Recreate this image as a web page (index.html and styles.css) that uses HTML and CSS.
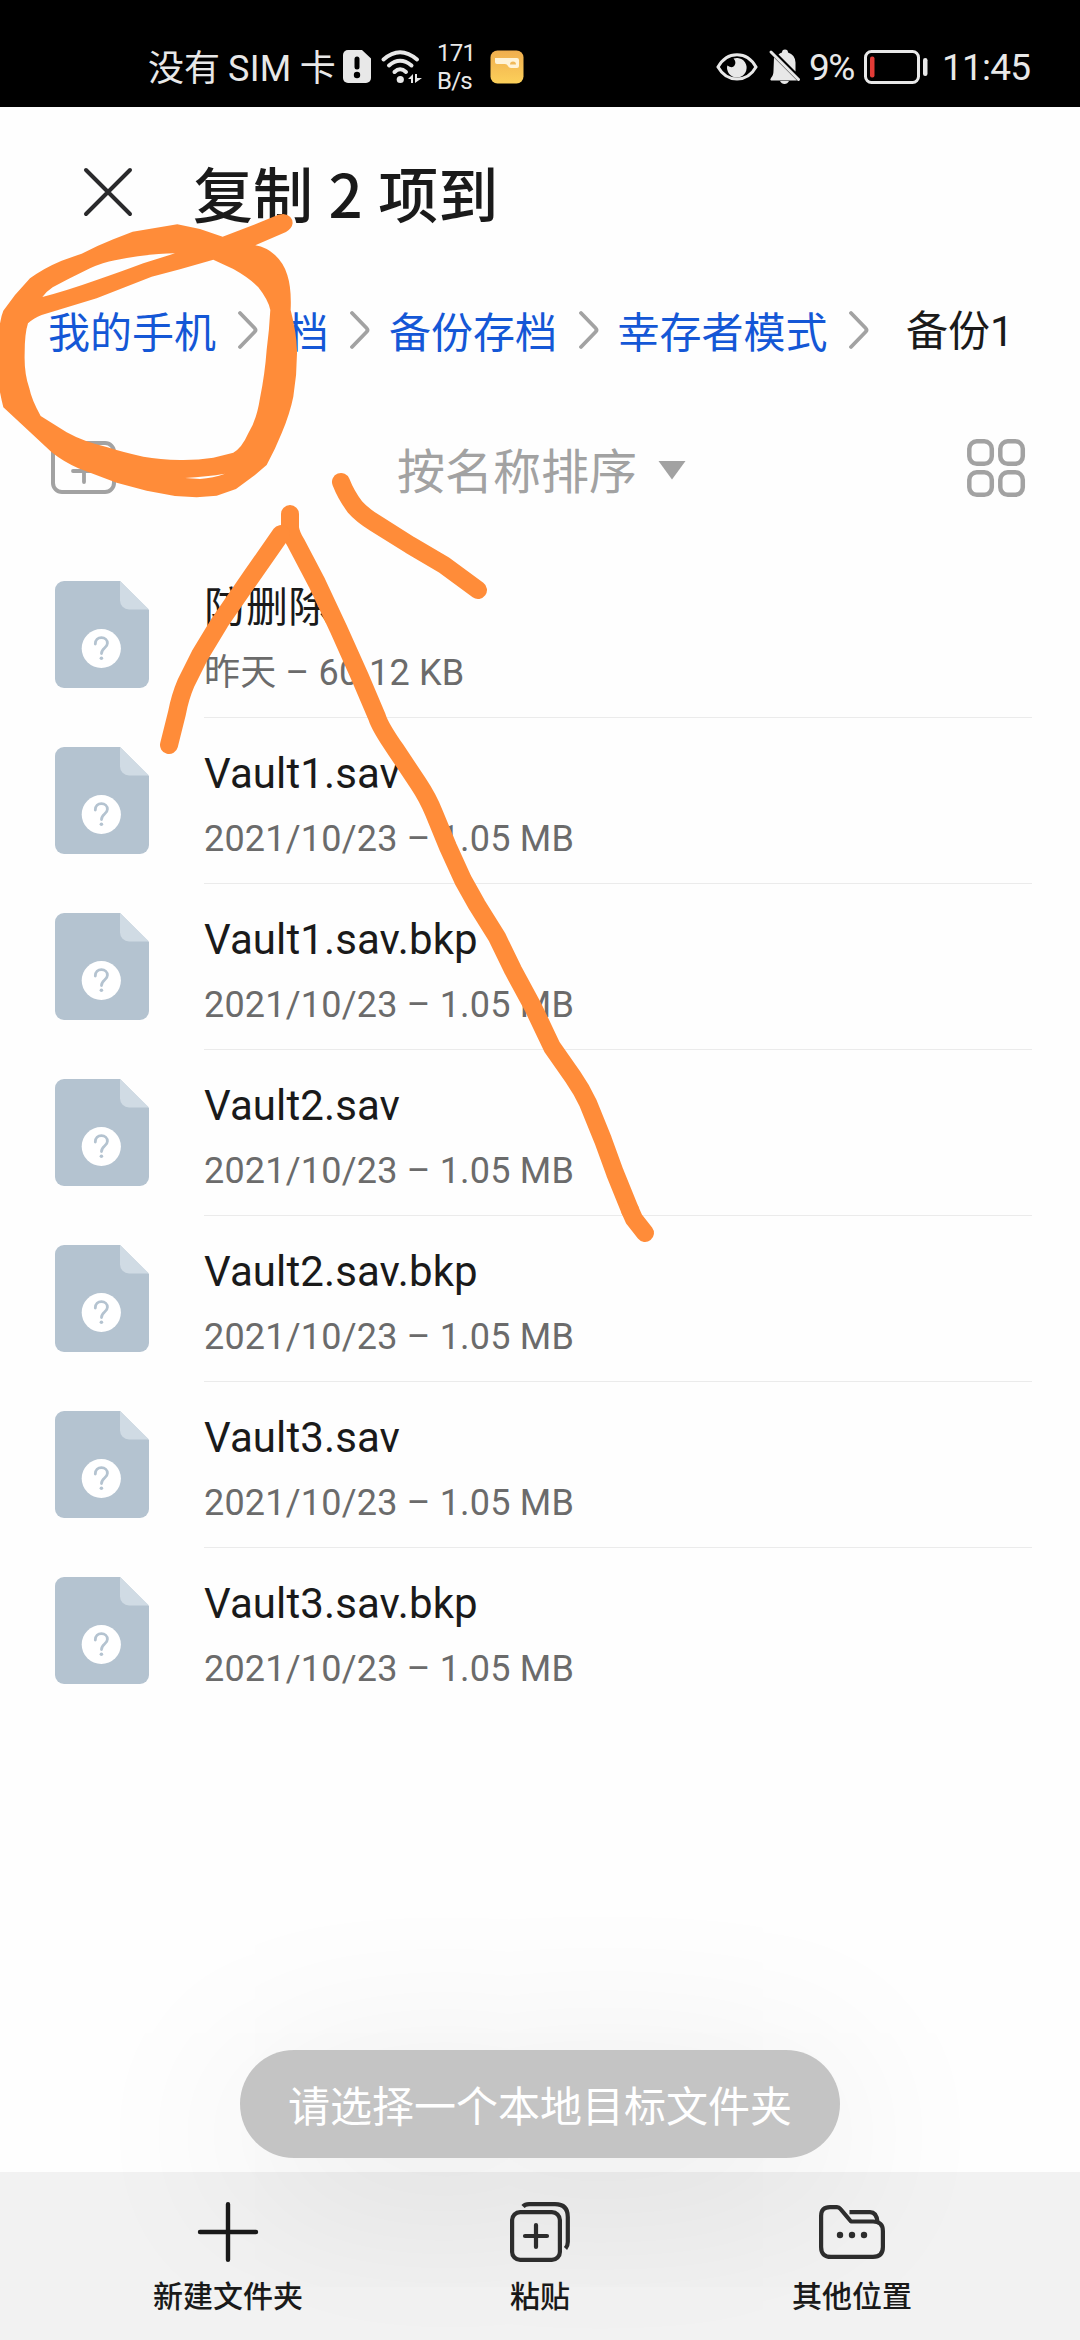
FILE: index.html
```html
<!DOCTYPE html>
<html lang="zh-CN">
<head>
<meta charset="utf-8">
<title>复制 2 项到</title>
<link rel="stylesheet" href="styles.css">
</head>
<body>
<svg class="defs" aria-hidden="true">
  <symbol id="file" viewBox="0 0 94 107">
    <path d="M9 0H65L94 29V98a9 9 0 0 1-9 9H9a9 9 0 0 1-9-9V9a9 9 0 0 1 9-9Z" fill="#b4c3d0"/>
    <path d="M65 0L94 28.500H74a9 9 0 0 1-9-9Z" fill="#d0dbe4"/>
    <circle cx="46.300" cy="67.500" r="19.600" fill="#fff"/>
    <path d="M40.300 63c0-4 2.700-6.300 6.100-6.300s6 2.300 6 5.600c0 4.800-5.900 4.800-5.900 10.200" fill="none" stroke="#b4c3d0" stroke-width="2.800" stroke-linecap="round"/>
    <circle cx="46.400" cy="77.300" r="1.800" fill="#b4c3d0"/>
  </symbol>
  <symbol id="chevron" viewBox="0 0 20 40">
    <path d="M2 3L16.500 18Q18.500 20 16.500 22L2 37" fill="none" stroke="#a2a2a2" stroke-width="3.800" stroke-linecap="round"/>
  </symbol>
</svg>
<div class="screen">
  <header class="status">
    <span class="carrier">没有 <span class="latin">SIM</span> 卡</span>
    <svg class="sim" width="28" height="34" viewBox="0 0 28 34"><path d="M5 0H19L28 8.500V28a5 5 0 0 1-5 5H5a5 5 0 0 1-5-5V5a5 5 0 0 1 5-5Z" fill="#e8e8e8"/><path d="M14 9v8" stroke="#000" stroke-width="5" stroke-linecap="round"/><circle cx="14" cy="25" r="3.200"/></svg>
    <svg class="wifi" width="42" height="34" viewBox="0 0 42 34"><g fill="none" stroke="#e8e8e8" stroke-width="4" stroke-linecap="round"><path d="M2.500 9.500Q19 -5 36 9.500"/><path d="M8 15.500Q19 6 30.500 15.500"/><path d="M13.500 22Q19 16.500 25 22"/></g><circle cx="19.300" cy="29.500" r="3.600" fill="#e8e8e8"/><path d="M27 29l5-5v9h-2v-4ZM34 33V24h2v4h5Z" fill="#e8e8e8"/></svg>
    <span class="speed"><span>171</span><span>B/s</span></span>
    <svg class="app" width="34" height="34" viewBox="0 0 34 34"><defs><linearGradient id="gold" x2="0" y2="1"><stop offset="0" stop-color="#f0ae4e"/><stop offset="1" stop-color="#fcd05a"/></linearGradient></defs><rect x=".5" y=".5" width="33" height="33" rx="7" fill="url(#gold)"/><path d="M5 8h22q2 0 2 2v6q0 2-2 2h-6q-2 0-3-2t-3-2H7q-2 0-2-2Z" fill="#fff3d6"/><path d="M20 14.500q0-3 3-3t3 3Z" fill="#f0b959"/></svg>
    <svg class="eye" width="42" height="30" viewBox="0 0 42 30"><path d="M2 15C11-1.500 31-1.500 40 15C31 31 11 31 2 15Z" fill="none" stroke="#e8e8e8" stroke-width="3"/><path d="M17.500 6.500a9.800 9.800 0 1 1-6.200 7q5 3.500 7.200 0t-1-7Z" fill="#e8e8e8"/></svg>
    <svg class="bell" width="32" height="36" viewBox="0 0 32 36"><path d="M5 9L28 32H2q-1.500-1 0-2.500Q4.500 27 4.500 22ZM9.500 6Q11 4.500 13 4q0-3 3-3t3 3q7 2 7.500 10v9ZM11 32.500h9q-1.500 3-4.500 3t-4.500-3Z" fill="#e8e8e8" transform="translate(0 -.5)"/><path d="M2 3L29.500 30.500" stroke="#e8e8e8" stroke-width="3" stroke-linecap="round"/></svg>
    <span class="percent">9%</span>
    <svg class="battery" width="64" height="34" viewBox="0 0 64 34"><rect x="1.500" y="1.500" width="53" height="31" rx="6" fill="none" stroke="#e8e8e8" stroke-width="3"/><rect x="6" y="6.500" width="4.500" height="21" rx="2" fill="#e23b36"/><rect x="59" y="8" width="4.500" height="18" rx="2.200" fill="#e8e8e8"/></svg>
    <span class="clock">11:45</span>
  </header>

  <div class="titlebar">
    <svg width="50" height="50" viewBox="0 0 50 50"><path d="M3 3L47 47M47 3L3 47" stroke="#2a2a2c" stroke-width="4" stroke-linecap="round"/></svg>
    <h1 class="title">复制 2 项到</h1>
  </div>

  <nav class="crumbs">
    <span class="crumb">我的手机</span><svg class="chev"><use href="#chevron"/></svg>
    <span class="crumb cut">档</span><svg class="chev"><use href="#chevron"/></svg>
    <span class="crumb">备份存档</span><svg class="chev"><use href="#chevron"/></svg>
    <span class="crumb">幸存者模式</span><svg class="chev"><use href="#chevron"/></svg>
    <span class="crumb current">备份<span class="latin">1</span></span>
  </nav>

  <div class="tools">
    <svg width="65" height="54" viewBox="0 0 65 54"><rect x="2" y="2" width="61" height="49" rx="9" fill="none" stroke="#a2a2a2" stroke-width="4"/><path d="M22 30H44M33 19V41" stroke="#a2a2a2" stroke-width="3.800" stroke-linecap="round"/></svg>
    <div class="sort">按名称排序<svg width="28" height="20" viewBox="0 0 28 20"><path d="M.5 1H27.500L14 19.500Z" fill="#a2a2a2"/></svg></div>
    <svg width="60" height="60" viewBox="0 0 60 60"><g fill="none" stroke="#a2a2a2" stroke-width="4.500"><rect x="3.300" y="3.300" width="22.500" height="22.500" rx="7.500"/><rect x="34.300" y="3.300" width="22.500" height="22.500" rx="7.500"/><rect x="3.300" y="34.300" width="22.500" height="22.500" rx="7.500"/><rect x="34.300" y="34.300" width="22.500" height="22.500" rx="7.500"/></g></svg>
  </div>

  <main class="files">
    <div class="file"><svg class="icon"><use href="#file"/></svg><div class="info"><div class="name">防删除</div><div class="meta">昨天 – 60.12 KB</div></div></div>
    <div class="file"><svg class="icon"><use href="#file"/></svg><div class="info"><div class="name">Vault1.sav</div><div class="meta">2021/10/23 – 1.05 MB</div></div></div>
    <div class="file"><svg class="icon"><use href="#file"/></svg><div class="info"><div class="name">Vault1.sav.bkp</div><div class="meta">2021/10/23 – 1.05 MB</div></div></div>
    <div class="file"><svg class="icon"><use href="#file"/></svg><div class="info"><div class="name">Vault2.sav</div><div class="meta">2021/10/23 – 1.05 MB</div></div></div>
    <div class="file"><svg class="icon"><use href="#file"/></svg><div class="info"><div class="name">Vault2.sav.bkp</div><div class="meta">2021/10/23 – 1.05 MB</div></div></div>
    <div class="file"><svg class="icon"><use href="#file"/></svg><div class="info"><div class="name">Vault3.sav</div><div class="meta">2021/10/23 – 1.05 MB</div></div></div>
    <div class="file"><svg class="icon"><use href="#file"/></svg><div class="info"><div class="name">Vault3.sav.bkp</div><div class="meta">2021/10/23 – 1.05 MB</div></div></div>
  </main>

  <footer class="actions">
    <div class="action"><svg width="66" height="60" viewBox="0 0 66 60"><path d="M5 30H61M33 2.200V57.800" stroke="#1a1a1a" stroke-width="4.400" stroke-linecap="round"/></svg><span>新建文件夹</span></div>
    <div class="action"><svg width="66" height="60" viewBox="0 0 66 60"><g fill="none" stroke="#2e2e2e" stroke-width="4.200"><rect x="5.100" y="10.100" width="47.800" height="47.800" rx="8"/><path d="M16 4.500Q18 2.200 22 2.200H48Q60.800 2.200 60.800 15V40Q60.800 44 58.500 46.500"/><path d="M18 34H40M29 23V45" stroke-linecap="round"/></g></svg><span>粘贴</span></div>
    <div class="action"><svg width="66" height="60" viewBox="0 0 66 60"><g fill="none" stroke="#2e2e2e" stroke-width="4.200" stroke-linejoin="round"><path d="M2.100 14Q2.100 5.100 11 5.100H18Q20 5.100 21.500 7L32 19.500H54Q63.900 19.500 63.900 29V45Q63.900 54.900 54 54.900H12Q2.100 54.900 2.100 45Z"/><path d="M30.500 10.200H51Q57.500 10.200 58.500 20"/></g><g fill="#2e2e2e"><circle cx="21" cy="33" r="3.200"/><circle cx="33" cy="33" r="3.200"/><circle cx="45" cy="33" r="3.200"/></g></svg><span>其他位置</span></div>
  </footer>

  <div class="toast">请选择一个本地目标文件夹</div>

  <svg class="doodle" viewBox="0 0 1080 2340">
    <path transform="translate(0 200) scale(.3333)" fill="#ff8c39" fill-rule="evenodd" d="M850 42Q878 46 878 70Q876 86 858 96L766 136Q800 142 825 165Q852 190 862 225Q875 265 872 330Q890 400 891 450Q892 520 880 590Q870 640 845 700Q825 750 800 795L765 825L708 867L650 887L590 892L525 888L440 872L350 848L235 805Q190 785 155 757L110 715L60 668L10 622Q2 590 -3 560V400Q0 355 10 332L45 285L90 235Q130 205 185 182L245 161Q290 138 340 118L398 95L532 73L600 87L668 110L760 75L835 44ZM127 291Q140 274 158 262L205 237L270 205Q310 187 345 181Q450 160 525 160L430 190Q350 220 290 240Q200 272 127 291ZM84 370Q100 355 125 345L290 295L455 230L540 208L640 179L700 207Q750 235 775 262Q805 300 811 330Q808 390 800 450Q795 520 780 595Q770 660 745 700Q725 745 700 758L640 773Q590 781 540 780Q480 779 430 770Q370 757 320 741Q250 725 200 697L122 648Q95 600 88 565Q72 520 74 460Q74 400 84 370ZM555 834Q620 830 675 821Q640 834 600 837Z"/>
    <g fill="none" stroke="#ff8c39" stroke-width="18" stroke-linecap="round" stroke-linejoin="round">
      <path d="M290 514V528Q291 535 296 543L317 583L339 630L360 677L377 717Q380 727 396 750L418 783Q428 798 434 813L448 847L463 880L477 905L497 937L513 970L533 1007L552 1047L573 1077Q582 1090 588 1103L603 1140L615 1173L630 1210"/>
      <path d="M630 1210L634 1219L645 1233"/>
      <path d="M281 534L251 577L220 622L200 655L186 683Q180 697 177 713L169 745"/>
      <path d="M341 482Q346 495 355 507Q362 515 375 523L410 545L444 565L478 590"/>
    </g>
  </svg>
</div>
</body>
</html>
```
FILE: styles.css
```css
* { box-sizing: border-box; }
body { margin: 0; background: #fff; }
svg { display: block; flex: none; overflow: visible; }
.defs { position: absolute; width: 0; height: 0; }

.screen {
  position: relative;
  display: flex;
  flex-direction: column;
  width: 1080px;
  height: 2340px;
  overflow: hidden;
  background: #fefefe;
  color: #1a1a1a;
  font-family: "Noto Sans CJK SC", sans-serif;
  white-space: nowrap;
}
.latin { font-family: Roboto, sans-serif; }

.status {
  display: flex;
  align-items: center;
  height: 107px;
  padding: 26px 0 0 148px;
  background: #000;
  color: #e8e8e8;
  font-size: 36px;
  line-height: 40px;
}
.carrier { width: 188px; margin-right: 7px; }
.carrier .latin { letter-spacing: .3px; }
.sim { margin-right: 10px; }
.wifi { margin-right: 14px; }
.speed {
  display: flex;
  flex-direction: column;
  width: 38px;
  margin-right: 15px;
  font: 24px/28px Roboto, sans-serif;
  letter-spacing: -.8px;
}
.app { margin-right: 192px; }
.eye { margin-right: 11px; }
.bell { margin-right: 8px; }
.percent, .clock { padding-top: 3px; font-family: Roboto, sans-serif; font-size: 37px; }
.percent { width: 47px; margin-right: 8px; letter-spacing: -1.5px; }
.battery { margin-right: 14px; }
.clock { letter-spacing: -.8px; }

.titlebar {
  display: flex;
  align-items: center;
  gap: 60px;
  height: 170px;
  padding: 0 0 0 83px;
}
.title { margin: 0; font-size: 60px; line-height: 80px; font-weight: 500; word-spacing: 2px; }

.crumbs {
  display: flex;
  align-items: center;
  height: 106px;
  padding-left: 48px;
  color: #1457d6;
  font-size: 42px;
  line-height: 60px;
}
.chev { width: 20px; height: 40px; margin: 0 19px 0 21.5px; }
.cut { width: 52px; text-align: right; }
.current { margin-left: 18px; color: #1a1a1a; }

.tools {
  display: flex;
  align-items: center;
  justify-content: space-between;
  height: 169px;
  padding: 0 54px 0 51px;
}
.sort {
  display: flex;
  align-items: center;
  gap: 21px;
  margin-left: 1px;
  color: #a2a2a2;
  font-size: 48px;
  line-height: 64px;
}
.sort svg { margin-top: 5px; }

.file {
  display: flex;
  height: 166px;
  padding: 0 48px 0 55px;
}
.icon { width: 94px; height: 107px; margin: 29px 55px 0 0; }
.info {
  flex: 1;
  padding-top: 31px;
  border-bottom: 1px solid #ebebeb;
  font-family: Roboto, "Noto Sans CJK SC", sans-serif;
}
.file:last-child .info { border-bottom: 0; }
.name { height: 50px; font-size: 42px; line-height: 50px; letter-spacing: .1px; }
.meta { height: 44px; margin-top: 18px; color: #6b6b6b; font-size: 36px; line-height: 44px; letter-spacing: .2px; }

.actions {
  display: grid;
  grid-template-columns: repeat(3, 312px);
  justify-content: center;
  height: 168px;
  margin-top: auto;
  padding-top: 30px;
  background: #f2f2f2;
}
.action {
  display: flex;
  flex-direction: column;
  align-items: center;
  gap: 10px;
  font-size: 30px;
  line-height: 44px;
  font-weight: 500;
}

.toast {
  position: absolute;
  left: 240px;
  top: 2050px;
  width: 600px;
  height: 108px;
  border-radius: 54px;
  background: #c4c4c4;
  box-shadow: 0 30px 190px rgba(0, 0, 0, .11);
  color: #fff;
  font-size: 42px;
  line-height: 108px;
  text-align: center;
}
.doodle { position: absolute; left: 0; top: 0; width: 1080px; height: 2340px; }
```
